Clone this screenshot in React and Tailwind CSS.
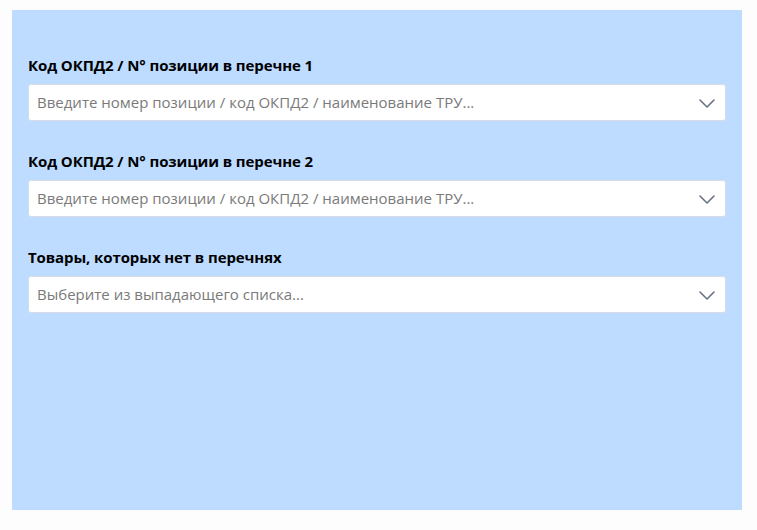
const fields = [
  { label: 'Код ОКПД2 / N° позиции в перечне 1', placeholder: 'Введите номер позиции / код ОКПД2 / наименование ТРУ...' },
  { label: 'Код ОКПД2 / N° позиции в перечне 2', placeholder: 'Введите номер позиции / код ОКПД2 / наименование ТРУ...' },
  { label: 'Товары, которых нет в перечнях', placeholder: 'Выберите из выпадающего списка...' },
];

function Chevron() {
  return (
    <svg width="16" height="16" viewBox="0 0 16 16" fill="none" className="shrink-0">
      <path d="M1 5l7 7 7-7" stroke="#6b7280" strokeWidth="1.6" strokeLinecap="round" strokeLinejoin="round" />
    </svg>
  );
}

export default function App() {
  return (
    <div className="w-[757px] h-[530px] bg-[#fdfdfe] pt-[10px] pl-[12px] font-['Open_Sans',sans-serif]">
      <div className="w-[730px] h-[500px] bg-[#bddcff] px-4 pt-[45px] flex flex-col gap-[30px]">
        {fields.map((f) => (
          <div key={f.label} className="flex flex-col gap-[9px]">
            <div className="text-[15px] leading-5 font-bold text-black tracking-[-0.1px]">{f.label}</div>
            <div className="h-[37px] bg-white border border-[#d8dde3] rounded-[3px] flex items-center pl-[8px] pr-[10px]">
              <span className="flex-1 text-[15px] text-[#7a7a7a] truncate">{f.placeholder}</span>
              <Chevron />
            </div>
          </div>
        ))}
      </div>
    </div>
  );
}
